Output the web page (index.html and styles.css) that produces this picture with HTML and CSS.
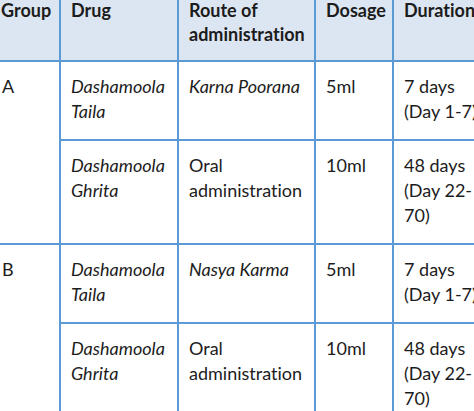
FILE: index.html
```html
<!DOCTYPE html>
<html>
<head>
<meta charset="utf-8">
<link rel="stylesheet" href="styles.css">
</head>
<body>
<table class="grid">
  <colgroup>
    <col class="c-group">
    <col class="c-drug">
    <col class="c-route">
    <col class="c-dose">
    <col class="c-dur">
  </colgroup>
  <thead>
    <tr class="head">
      <th class="first">Group</th>
      <th>Drug</th>
      <th>Route of administration</th>
      <th>Dosage</th>
      <th>Duration</th>
    </tr>
  </thead>
  <tbody>
    <tr>
      <td class="first" rowspan="2">A</td>
      <td class="it">Dashamoola Taila</td>
      <td class="it">Karna Poorana</td>
      <td>5ml</td>
      <td>7 days (Day 1-7)</td>
    </tr>
    <tr>
      <td class="it">Dashamoola Ghrita</td>
      <td>Oral administration</td>
      <td>10ml</td>
      <td>48 days (Day 22-70)</td>
    </tr>
    <tr>
      <td class="first" rowspan="2">B</td>
      <td class="it">Dashamoola Taila</td>
      <td class="it">Nasya Karma</td>
      <td>5ml</td>
      <td>7 days (Day 1-7)</td>
    </tr>
    <tr>
      <td class="it">Dashamoola Ghrita</td>
      <td>Oral administration</td>
      <td>10ml</td>
      <td>48 days (Day 22-70)</td>
    </tr>
  </tbody>
</table>
</body>
</html>
```

FILE: styles.css
```css
html, body {
  margin: 0;
  padding: 0;
  background: #ffffff;
  overflow: hidden;
}

body {
  width: 474px;
  height: 411px;
  font-family: Lato, "Open Sans", sans-serif;
  font-size: 18px;
  font-variant-ligatures: none;
  color: #1c1c1c;
}

.grid {
  border-collapse: collapse;
  table-layout: fixed;
  width: 496px;
  margin-top: -2px;
}

.c-group { width: 60px; }
.c-drug { width: 118px; }
.c-route { width: 137px; }
.c-dose { width: 78px; }
.c-dur { width: 103px; }

.grid th,
.grid td {
  border: 2px solid #5b9bd5;
  text-align: left;
  vertical-align: top;
  line-height: 25px;
  padding: 12px 10px 15px 10px;
}

.grid tr:first-child th { border-top: none; }
.grid .first { border-left: none; padding-left: 2px; }

.head th {
  background: #dce6f2;
  font-weight: 700;
  line-height: 24px;
  padding-top: 0;
  padding-bottom: 14px;
}

.head th.first { padding-left: 1px; }

.it { font-style: italic; }
```
